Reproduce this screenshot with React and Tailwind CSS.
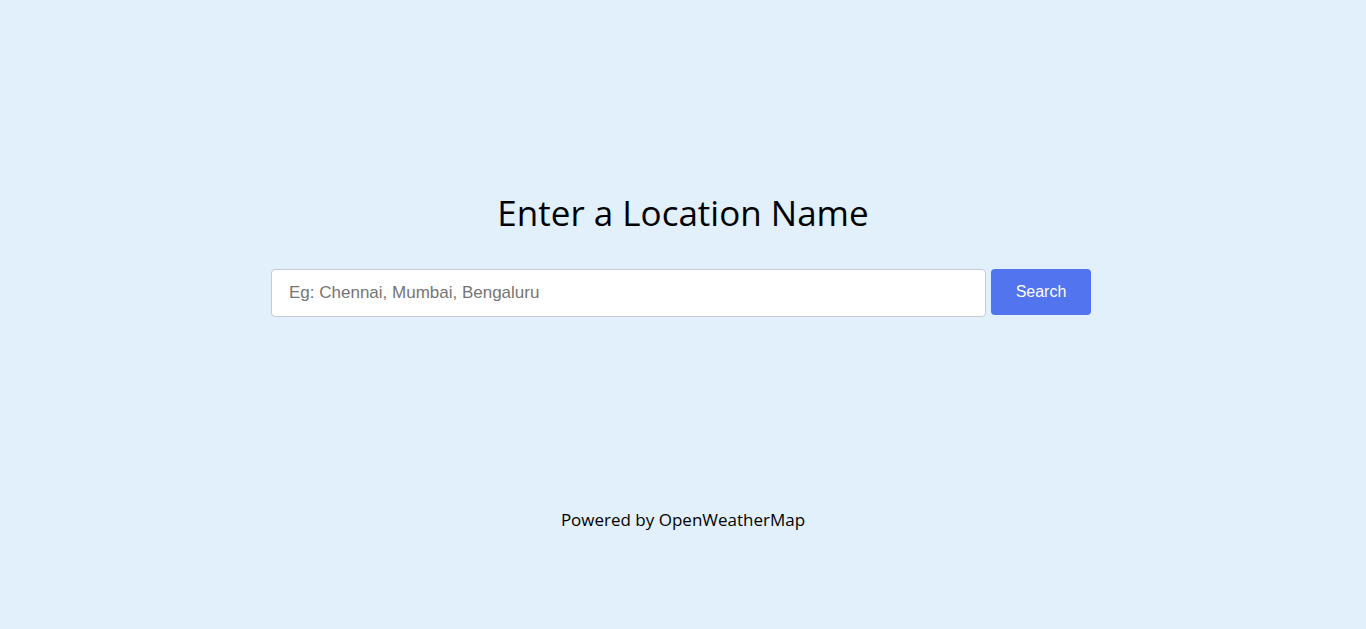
export default function App() {
  return (
    <div className="min-h-[629px] bg-[#e2f0fc] flex flex-col items-center font-['Open_Sans',sans-serif] text-black">
      {/* Search block */}
      <div className="pt-[189px] flex flex-col items-center">
        <h1 className="text-[35px] leading-[48px] font-normal">Enter a Location Name</h1>
        <div className="mt-[32px] flex items-start gap-[5px] ml-[-4px]">
          <input
            type="text"
            placeholder="Eg: Chennai, Mumbai, Bengaluru"
            className="w-[715px] h-[48px] bg-white border border-[#c6cbd1] rounded-[4px] px-[17px] text-[17px] font-['Liberation_Sans',Arial,sans-serif] placeholder-[#757575] focus:outline-none"
          />
          <button className="w-[100px] h-[46px] bg-[#5274ef] text-white rounded-[4px] text-[16px] font-['Liberation_Sans',Arial,sans-serif]">
            Search
          </button>
        </div>
      </div>

      <p className="mt-[191px] text-[17px] leading-[24px]">Powered by OpenWeatherMap</p>
    </div>
  )
}
